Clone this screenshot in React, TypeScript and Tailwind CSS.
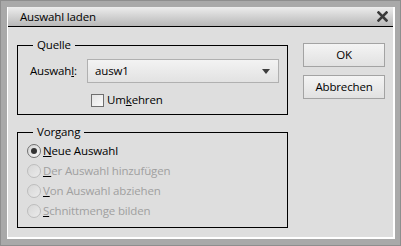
export default function App() {
  const radios = [
    { k: "N", rest: "eue Auswahl", on: true },
    { k: "D", rest: "er Auswahl hinzufügen", on: false },
    { k: "V", rest: "on Auswahl abziehen", on: false },
    { k: "S", rest: "chnittmenge bilden", on: false },
  ];

  return (
    <div className="w-[401px] h-[246px] bg-[#a9a9a9] border border-[#8e8e8e] pt-[6px] pl-[6px] pr-[5px] pb-[6px] font-['Open_Sans',sans-serif] text-[11.5px] tracking-[-0.15px] text-black">
      <div className="h-full flex flex-col border-l border-r-2 border-b-2 border-white">
        {/* title bar */}
        <div className="h-[20px] shrink-0 flex items-center justify-between border-b border-black bg-gradient-to-b from-[#ededed] to-[#b8b8b8] pl-[12px] pr-[5px]">
          <span className="leading-none">Auswahl laden</span>
          <svg width="11" height="11" viewBox="0 0 11 11">
            <path d="M1.5 1.5 L9.5 9.5 M9.5 1.5 L1.5 9.5" stroke="#3a3a3a" strokeWidth="2.6" strokeLinecap="square" />
          </svg>
        </div>

        {/* body */}
        <div className="flex-1 bg-[#dedede] flex pt-[10px] pl-[9px]">
          <div className="w-[271px] flex flex-col">
            <fieldset className="border border-black h-[78px] px-0">
              <legend className="ml-[15px] px-[4px] leading-[16px]">Quelle</legend>
              <div className="pl-[12px] pt-[6px]">
                <div className="flex items-center h-[24px]">
                  <span className="w-[57px]">
                    Auswah<u>l</u>:
                  </span>
                  <div className="w-[192px] h-[24px] flex items-center justify-between border border-[#b0b0b0] bg-gradient-to-b from-[#f3f3f3] to-[#e2e2e2] pl-[7px] pr-[8px]">
                    <span>ausw1</span>
                    <svg width="8" height="5" viewBox="0 0 8 5">
                      <path d="M0 0 H8 L4 5 Z" fill="#3e3e3e" />
                    </svg>
                  </div>
                </div>
                <div className="flex items-center mt-[10px] ml-[61px]">
                  <div className="w-[13px] h-[13px] border border-[#6f6f6f] bg-gradient-to-br from-[#e4e4e4] to-[#fafafa]" />
                  <span className="ml-[3px] leading-[14px]">
                    Um<u>k</u>ehren
                  </span>
                </div>
              </div>
            </fieldset>

            <fieldset className="border border-black h-[104px] mt-[9px] px-0">
              <legend className="ml-[15px] px-[4px] leading-[16px]">Vorgang</legend>
              <div className="pl-[9px] pt-[1px]">
                {radios.map((r) => (
                  <div key={r.k} className="h-[20px] flex items-center">
                    {r.on ? (
                      <div className="w-[14px] h-[14px] rounded-full border border-[#707070] bg-gradient-to-br from-[#d4d4d4] to-[#f7f7f7] flex items-center justify-center">
                        <div className="w-[6px] h-[6px] rounded-full bg-[#333333]" />
                      </div>
                    ) : (
                      <div className="w-[14px] h-[14px] rounded-full border border-[#bdbdbd] bg-gradient-to-br from-[#d6d6d6] to-[#ebebeb]" />
                    )}
                    <span className={`ml-[2px] ${r.on ? "text-black" : "text-[#a0a0a0]"}`}>
                      <u className="decoration-black">{r.k}</u>
                      {r.rest}
                    </span>
                  </div>
                ))}
              </div>
            </fieldset>
          </div>

          <div className="ml-[15px] pt-[6px] flex flex-col gap-[8px]">
            <button className="w-[82px] h-[24px] border border-[#a3a3a3] bg-gradient-to-b from-[#f4f4f4] to-[#e1e1e1]">
              OK
            </button>
            <button className="w-[82px] h-[24px] border border-[#a3a3a3] bg-gradient-to-b from-[#f4f4f4] to-[#e1e1e1]">
              Abbrechen
            </button>
          </div>
        </div>
      </div>
    </div>
  );
}
